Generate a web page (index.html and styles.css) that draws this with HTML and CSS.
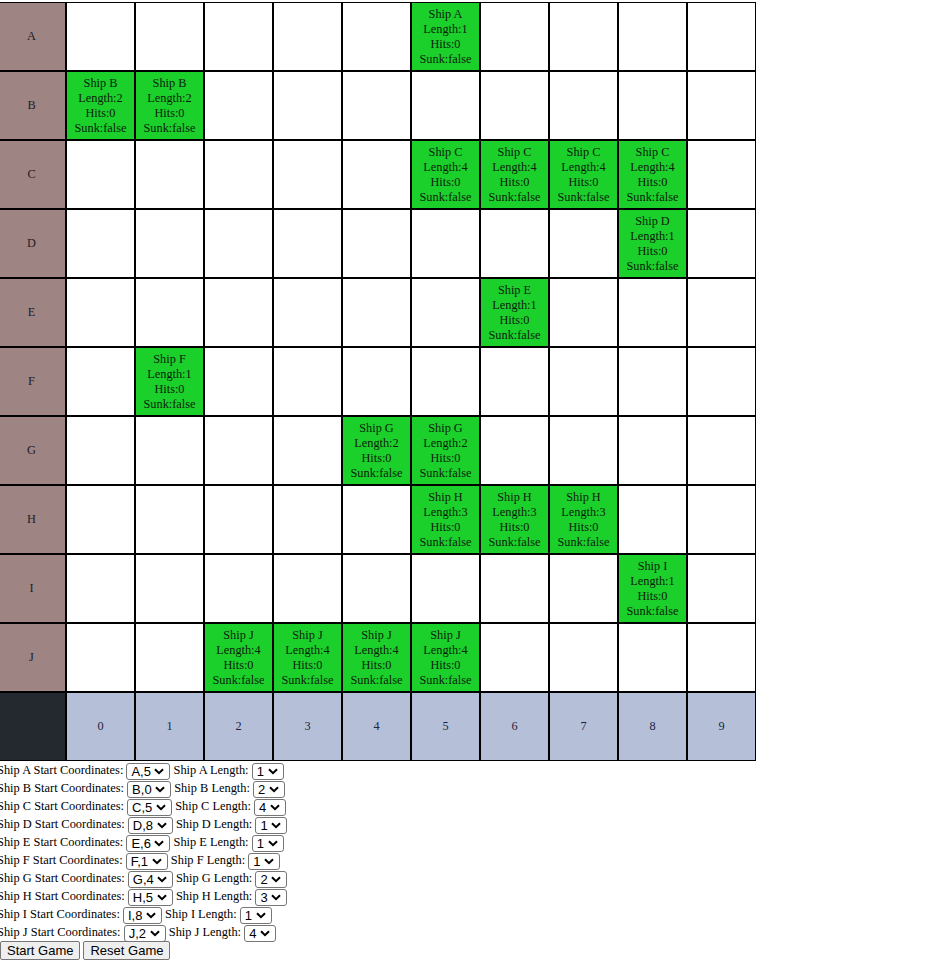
FILE: index.html
```html
<!DOCTYPE html>
<html>
<head>
<meta charset="utf-8">
<link rel="stylesheet" href="styles.css">
</head>
<body>
<div class="page">
<div class="board">
  <div class="cell label">A</div><div class="cell"></div><div class="cell"></div><div class="cell"></div><div class="cell"></div><div class="cell"></div><div class="cell ship">Ship A<br>Length:1<br>Hits:0<br>Sunk:false</div><div class="cell"></div><div class="cell"></div><div class="cell"></div><div class="cell"></div>
  <div class="cell label">B</div><div class="cell ship">Ship B<br>Length:2<br>Hits:0<br>Sunk:false</div><div class="cell ship">Ship B<br>Length:2<br>Hits:0<br>Sunk:false</div><div class="cell"></div><div class="cell"></div><div class="cell"></div><div class="cell"></div><div class="cell"></div><div class="cell"></div><div class="cell"></div><div class="cell"></div>
  <div class="cell label">C</div><div class="cell"></div><div class="cell"></div><div class="cell"></div><div class="cell"></div><div class="cell"></div><div class="cell ship">Ship C<br>Length:4<br>Hits:0<br>Sunk:false</div><div class="cell ship">Ship C<br>Length:4<br>Hits:0<br>Sunk:false</div><div class="cell ship">Ship C<br>Length:4<br>Hits:0<br>Sunk:false</div><div class="cell ship">Ship C<br>Length:4<br>Hits:0<br>Sunk:false</div><div class="cell"></div>
  <div class="cell label">D</div><div class="cell"></div><div class="cell"></div><div class="cell"></div><div class="cell"></div><div class="cell"></div><div class="cell"></div><div class="cell"></div><div class="cell"></div><div class="cell ship">Ship D<br>Length:1<br>Hits:0<br>Sunk:false</div><div class="cell"></div>
  <div class="cell label">E</div><div class="cell"></div><div class="cell"></div><div class="cell"></div><div class="cell"></div><div class="cell"></div><div class="cell"></div><div class="cell ship">Ship E<br>Length:1<br>Hits:0<br>Sunk:false</div><div class="cell"></div><div class="cell"></div><div class="cell"></div>
  <div class="cell label">F</div><div class="cell"></div><div class="cell ship">Ship F<br>Length:1<br>Hits:0<br>Sunk:false</div><div class="cell"></div><div class="cell"></div><div class="cell"></div><div class="cell"></div><div class="cell"></div><div class="cell"></div><div class="cell"></div><div class="cell"></div>
  <div class="cell label">G</div><div class="cell"></div><div class="cell"></div><div class="cell"></div><div class="cell"></div><div class="cell ship">Ship G<br>Length:2<br>Hits:0<br>Sunk:false</div><div class="cell ship">Ship G<br>Length:2<br>Hits:0<br>Sunk:false</div><div class="cell"></div><div class="cell"></div><div class="cell"></div><div class="cell"></div>
  <div class="cell label">H</div><div class="cell"></div><div class="cell"></div><div class="cell"></div><div class="cell"></div><div class="cell"></div><div class="cell ship">Ship H<br>Length:3<br>Hits:0<br>Sunk:false</div><div class="cell ship">Ship H<br>Length:3<br>Hits:0<br>Sunk:false</div><div class="cell ship">Ship H<br>Length:3<br>Hits:0<br>Sunk:false</div><div class="cell"></div><div class="cell"></div>
  <div class="cell label">I</div><div class="cell"></div><div class="cell"></div><div class="cell"></div><div class="cell"></div><div class="cell"></div><div class="cell"></div><div class="cell"></div><div class="cell"></div><div class="cell ship">Ship I<br>Length:1<br>Hits:0<br>Sunk:false</div><div class="cell"></div>
  <div class="cell label">J</div><div class="cell"></div><div class="cell"></div><div class="cell ship">Ship J<br>Length:4<br>Hits:0<br>Sunk:false</div><div class="cell ship">Ship J<br>Length:4<br>Hits:0<br>Sunk:false</div><div class="cell ship">Ship J<br>Length:4<br>Hits:0<br>Sunk:false</div><div class="cell ship">Ship J<br>Length:4<br>Hits:0<br>Sunk:false</div><div class="cell"></div><div class="cell"></div><div class="cell"></div><div class="cell"></div>
  <div class="cell corner"></div><div class="cell num">0</div><div class="cell num">1</div><div class="cell num">2</div><div class="cell num">3</div><div class="cell num">4</div><div class="cell num">5</div><div class="cell num">6</div><div class="cell num">7</div><div class="cell num">8</div><div class="cell num">9</div>
</div>
<div class="form">
  <div class="row">Ship A Start Coordinates: <select><option>A,5</option></select> Ship A Length: <select><option>1</option></select></div>
  <div class="row">Ship B Start Coordinates: <select><option>B,0</option></select> Ship B Length: <select><option>2</option></select></div>
  <div class="row">Ship C Start Coordinates: <select><option>C,5</option></select> Ship C Length: <select><option>4</option></select></div>
  <div class="row">Ship D Start Coordinates: <select><option>D,8</option></select> Ship D Length: <select><option>1</option></select></div>
  <div class="row">Ship E Start Coordinates: <select><option>E,6</option></select> Ship E Length: <select><option>1</option></select></div>
  <div class="row">Ship F Start Coordinates: <select><option>F,1</option></select> Ship F Length: <select><option>1</option></select></div>
  <div class="row">Ship G Start Coordinates: <select><option>G,4</option></select> Ship G Length: <select><option>2</option></select></div>
  <div class="row">Ship H Start Coordinates: <select><option>H,5</option></select> Ship H Length: <select><option>3</option></select></div>
  <div class="row">Ship I Start Coordinates: <select><option>I,8</option></select> Ship I Length: <select><option>1</option></select></div>
  <div class="row">Ship J Start Coordinates: <select><option>J,2</option></select> Ship J Length: <select><option>4</option></select></div>
  <div class="buttons"><button class="btn start">Start Game</button><button class="btn">Reset Game</button></div>
</div>
</div>
</body>
</html>
```

FILE: styles.css
```css
html, body {
  margin: 0;
  padding: 0;
  background: #ffffff;
}
.page {
  margin-left: -3px;
  padding-top: 2px;
  font-family: "Liberation Serif", "Times New Roman", serif;
  color: #000;
}
.board {
  display: grid;
  grid-template-columns: repeat(11, 69px);
  grid-auto-rows: 69px;
  width: 759px;
}
.cell {
  box-sizing: border-box;
  border: 1px solid #000;
  background: #fff;
  display: flex;
  align-items: center;
  justify-content: center;
  text-align: center;
  font-size: 12.3px;
  line-height: 15px;
}
.cell.ship {
  background: #1bd02b;
  color: #0b1d0b;
}
.cell.label {
  background: #9e8482;
  color: #1c1c28;
}
.cell.corner {
  background: #24282f;
}
.cell.num {
  background: #b5c0d8;
  color: #1e2440;
}
.form {
  font-size: 12.4px;
}
.row {
  height: 18px;
  line-height: 18px;
  white-space: nowrap;
}
select {
  -webkit-appearance: none;
  appearance: none;
  box-sizing: border-box;
  font-family: "Liberation Sans", Arial, sans-serif;
  font-size: 13px;
  line-height: 15px;
  height: 17px;
  padding: 0 18px 0 4px;
  border: 1px solid #767676;
  border-radius: 3px;
  background-color: #fff;
  background-image: url("data:image/svg+xml,%3Csvg xmlns='http://www.w3.org/2000/svg' width='10' height='7' viewBox='0 0 10 7'%3E%3Cpath d='M1 1.2 L5 5.2 L9 1.2' fill='none' stroke='%23000' stroke-width='2'/%3E%3C/svg%3E");
  background-repeat: no-repeat;
  background-position: right 5px center;
  background-size: 10px 7px;
  color: #000;
  vertical-align: middle;
  margin: 0;
}
.buttons {
  display: flex;
  gap: 3px;
  height: 20px;
}
.btn {
  font-family: "Liberation Sans", Arial, sans-serif;
  font-size: 13px;
  height: 19px;
  padding: 0 6px;
  margin: 0;
  border: 1px solid #767676;
  border-radius: 2px;
  background: #efefef;
  color: #000;
}
.btn.start {
  margin-left: 3px;
}
```
